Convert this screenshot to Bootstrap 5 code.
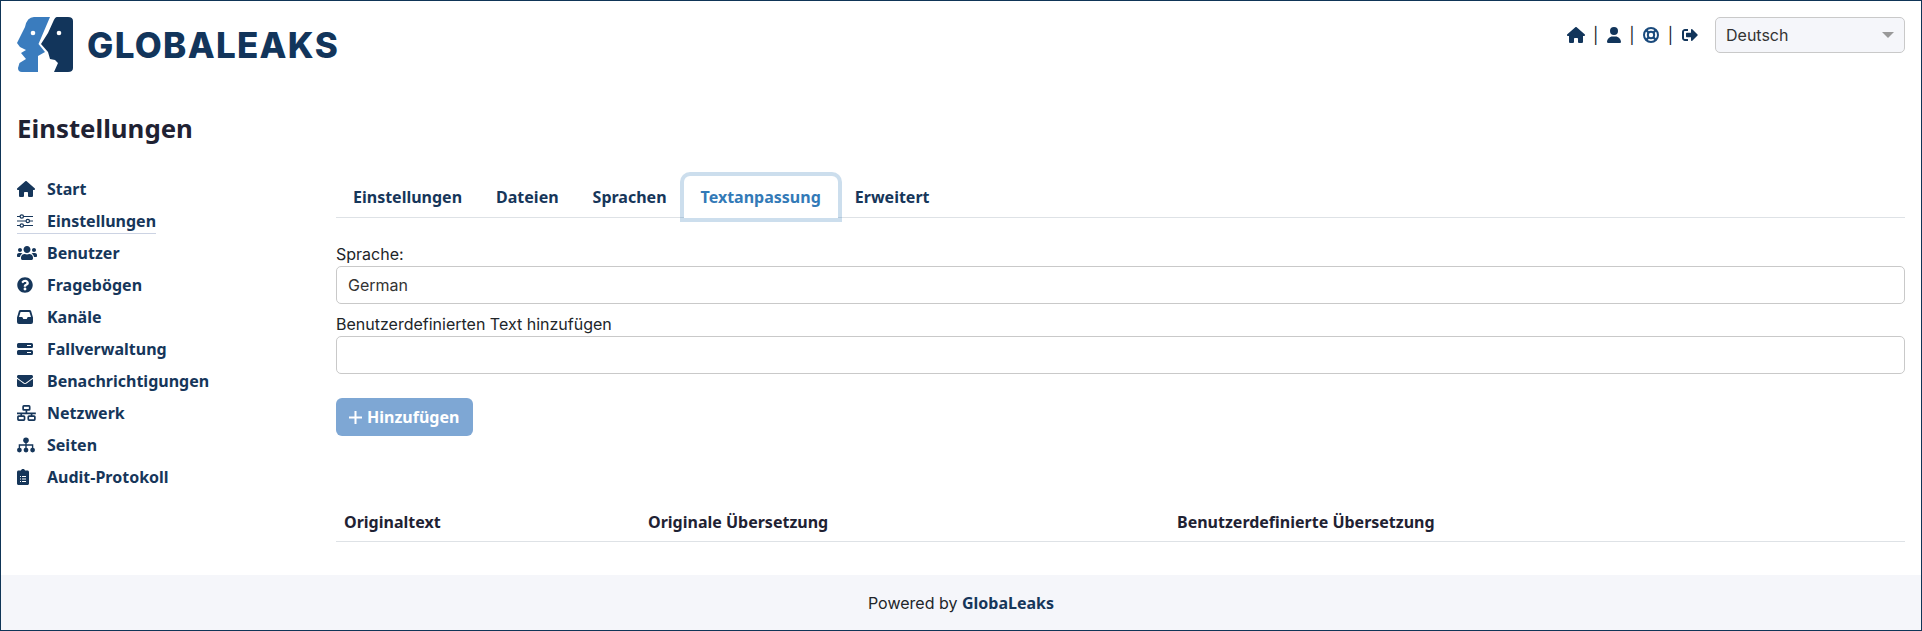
<!DOCTYPE html>
<html lang="de">
<head>
<meta charset="utf-8">
<title>GlobaLeaks</title>
<link rel="stylesheet" href="https://cdn.jsdelivr.net/npm/bootstrap@5.3.0/dist/css/bootstrap.min.css">
<style>
html,body{height:100%}
body{font-family:"Inter","Liberation Sans",sans-serif;font-size:16px;color:#212529;border:1px solid #0f3557;height:631px;overflow:hidden;background:#fff}
.gl-page{height:629px}
.gl-head{padding:16px 16px 0 16px;height:111px}
.gl-logo{width:56px;height:56px;display:block}
.gl-word{font-family:"Inter",sans-serif;font-weight:800;font-size:35px;line-height:1;color:#12355b;margin-left:14px;letter-spacing:1.3px}
.gl-tools{height:36px;gap:8.5px}
.gl-tools svg{fill:#12355b;height:16px;width:auto;display:block}
.gl-sep{color:#212529;font-size:16px;line-height:1}
.gl-lang{width:190px;height:36px;background-color:#f5f6fa;border-color:#c9c9c9!important;color:#333;font-size:16px;padding:0 10px;margin-left:9px;border-radius:5px;display:flex;align-items:center;justify-content:space-between}
.gl-caret{width:0;height:0;border-left:6px solid transparent;border-right:6px solid transparent;border-top:6px solid #999}
.gl-title{font-family:"Noto Sans",sans-serif;font-weight:700;font-size:25.8px;line-height:32px;color:#1f2233;margin:0}
.gl-body{padding:0 16px}
.gl-side{width:319px;flex:none;padding-top:29px}
.gl-side ul{list-style:none;margin:0;padding:0}
.gl-side li{height:32px;display:flex;align-items:center;font-family:"Noto Sans",sans-serif;font-weight:700;font-size:16px;color:#16365a}
.gl-side .gl-ic{width:30px;flex:none;display:flex;align-items:center}
.gl-side svg{fill:#16365a;height:16px;width:auto;display:block}
.gl-cur{border-bottom:1px solid #ccd3e3;height:25px;display:inline-flex;align-items:center}
.gl-main{flex:1;min-width:0;padding-top:32px}
.gl-main .nav-tabs{margin-bottom:24px;border-bottom:1px solid #dee2e6}
.gl-main .nav-link{font-family:"Noto Sans",sans-serif;font-weight:700;font-size:16px;color:#16365a;padding:8px 16px;line-height:24px}
.gl-main .nav-link.active{color:#337ab7;background:#fff;border-color:transparent;box-shadow:0 0 0 4px rgba(51,122,183,.25);border-radius:6px 6px 0 0;position:relative;z-index:1}
.gl-label{line-height:24px;font-size:16px;margin:0;display:block;color:#212529}
.gl-input{height:38px;border-color:#c9c9c9;font-size:16px;padding:0 11px;color:#333;margin-bottom:8px;border-radius:5px}
.gl-add{background:#7ea7d4;border:0;color:#fff;font-family:"Noto Sans",sans-serif;font-weight:700;font-size:16px;height:38px;padding:0 14px 0 13px;border-radius:6px;margin-top:16px;gap:5px}
.gl-add svg{width:13px;height:13px;fill:none;stroke:#fff;stroke-width:2}
.gl-table{margin-top:67px;table-layout:fixed;margin-bottom:0}
.gl-table th{font-family:"Noto Sans",sans-serif;font-weight:700;font-size:16px;color:#1f2233;padding:8px;line-height:22px;border-bottom:1px solid #dee2e6}
.gl-c1{width:304px}
.gl-c2{width:529px}
.gl-foot{background:#f5f6fa;height:55px;font-size:16px;color:#212529}
.gl-foot b{font-family:"Noto Sans",sans-serif;font-weight:700;color:#16365a}
</style>
</head>
<body>
<div class="gl-page d-flex flex-column">
  <header class="gl-head d-flex justify-content-between align-items-start">
    <div class="d-flex align-items-center">
      <svg class="gl-logo" viewBox="17 17 56 56"><path fill="#3a7cbe" d="M50 17H34Q27 17 25 27L17 43 20 47 26 50 21 53 26 59 19.500 63 18 68Q18 72 22 72H38V56L45 52 38.500 44Z"/><path fill="#12355b" d="M57 17H68Q73 17 73 21V68Q73 72 68 72H54L58 63 55 60 50 59 48 52 41 44 48 33 53 22Q55 17 57 17Z"/><circle cx="33" cy="33" r="2.300" fill="#fff"/><circle cx="59" cy="33" r="2.300" fill="#fff"/></svg>
      <span class="gl-word">GLOBALEAKS</span>
    </div>
    <div class="gl-tools d-flex align-items-center">
      <svg viewBox="0 0 576 512"><path d="M575.800 255.500c0 18-15 32.100-32 32.100h-32l.7 160.200c0 2.700-.2 5.400-.5 8.100V472c0 22.100-17.900 40-40 40H456c-1.100 0-2.200 0-3.300-.1c-1.400 .1-2.800 .1-4.200 .1H416 392c-22.100 0-40-17.900-40-40V448 384c0-17.700-14.300-32-32-32H256c-17.700 0-32 14.300-32 32v64 24c0 22.100-17.900 40-40 40H160 128.100c-1.500 0-3-.1-4.500-.2c-1.200 .1-2.400 .2-3.600 .2H104c-22.100 0-40-17.900-40-40V360c0-.9 0-1.900 .1-2.800V287.600H32c-18 0-32-14-32-32.100c0-9 3-17 10-24L266.400 8c7-7 15-8 22-8s15 2 21 7L564.800 231.500c8 7 12 15 11 24z"/></svg>
      <span class="gl-sep">|</span>
      <svg viewBox="0 0 448 512"><path d="M224 256A128 128 0 1 0 224 0a128 128 0 1 0 0 256zm-45.700 48C79.800 304 0 383.800 0 482.300C0 498.700 13.300 512 29.700 512H418.300c16.400 0 29.700-13.300 29.700-29.700C448 383.800 368.200 304 269.700 304H178.300z"/></svg>
      <span class="gl-sep">|</span>
      <svg viewBox="0 0 16 16"><g fill="none" stroke="#1a4a7c"><circle cx="8" cy="8" r="7" stroke-width="2"/><circle cx="8" cy="8" r="3.200" stroke-width="2"/><path stroke-width="2.400" d="M3 3l2.500 2.500M13 3l-2.500 2.500M3 13l2.500-2.500M13 13l-2.500-2.500"/></g></svg>
      <span class="gl-sep">|</span>
      <svg viewBox="0 0 512 512"><path d="M497 273L329 441c-15 15-41 4.500-41-17v-96H152c-13.300 0-24-10.700-24-24v-96c0-13.300 10.700-24 24-24h136V88c0-21.400 25.900-32 41-17l168 168c9.300 9.400 9.300 24.600 0 34zM192 436v-40c0-6.600-5.400-12-12-12H96c-17.700 0-32-14.300-32-32V160c0-17.700 14.300-32 32-32h84c6.600 0 12-5.400 12-12V76c0-6.600-5.400-12-12-12H96c-53 0-96 43-96 96v192c0 53 43 96 96 96h84c6.600 0 12-5.400 12-12z"/></svg>
      <div class="gl-lang border"><span>Deutsch</span><span class="gl-caret"></span></div>
    </div>
  </header>
  <div class="gl-body"><h1 class="gl-title">Einstellungen</h1></div>
  <div class="gl-body d-flex flex-grow-1">
    <nav class="gl-side">
      <ul>
        <li><span class="gl-ic"><svg viewBox="0 0 576 512"><path d="M575.800 255.500c0 18-15 32.100-32 32.100h-32l.7 160.200c0 2.700-.2 5.400-.5 8.100V472c0 22.100-17.900 40-40 40H456c-1.100 0-2.200 0-3.300-.1c-1.400 .1-2.800 .1-4.200 .1H416 392c-22.100 0-40-17.900-40-40V448 384c0-17.700-14.300-32-32-32H256c-17.700 0-32 14.300-32 32v64 24c0 22.100-17.900 40-40 40H160 128.100c-1.500 0-3-.1-4.500-.2c-1.200 .1-2.400 .2-3.600 .2H104c-22.100 0-40-17.900-40-40V360c0-.9 0-1.900 .1-2.800V287.600H32c-18 0-32-14-32-32.100c0-9 3-17 10-24L266.400 8c7-7 15-8 22-8s15 2 21 7L564.800 231.500c8 7 12 15 11 24z"/></svg></span>Start</li>
        <li><span class="gl-cur"><span class="gl-ic"><svg viewBox="0 -1 16 16"><g fill="none" stroke="#16365a" stroke-width="1.200"><path d="M0 2.500h3M6.500 2.500H16M0 7h9M12.500 7H16M0 11.500h3M6.500 11.500H16"/><circle cx="4.800" cy="2.500" r="1.700"/><circle cx="10.800" cy="7" r="1.700"/><circle cx="4.800" cy="11.500" r="1.700"/></g></svg></span>Einstellungen</span></li>
        <li><span class="gl-ic"><svg viewBox="0 0 640 512"><path d="M96 224c35.300 0 64-28.700 64-64s-28.700-64-64-64-64 28.700-64 64 28.700 64 64 64zm448 0c35.300 0 64-28.700 64-64s-28.700-64-64-64-64 28.700-64 64 28.700 64 64 64zm32 32h-64c-17.600 0-33.500 7.100-45.100 18.600 40.300 22.100 68.900 62 75.100 109.400h66c17.700 0 32-14.300 32-32v-32c0-35.300-28.700-64-64-64zm-256 0c61.900 0 112-50.100 112-112S381.900 32 320 32 208 82.100 208 144s50.100 112 112 112zm76.800 32h-8.300c-20.800 10-43.900 16-68.500 16s-47.600-6-68.500-16h-8.300C179.600 288 128 339.600 128 403.200V432c0 26.500 21.500 48 48 48h288c26.500 0 48-21.500 48-48v-28.800c0-63.600-51.600-115.200-115.200-115.200zm-223.700-13.400C161.500 263.100 145.600 256 128 256H64c-35.300 0-64 28.700-64 64v32c0 17.700 14.300 32 32 32h65.900c6.300-47.400 34.900-87.300 75.200-109.400z"/></svg></span>Benutzer</li>
        <li><span class="gl-ic"><svg viewBox="0 0 512 512"><path d="M504 256c0 136.997-111.043 248-248 248S8 392.997 8 256C8 119.083 119.043 8 256 8s248 111.083 248 248zM262.655 90c-54.497 0-89.255 22.957-116.549 63.758-3.536 5.286-2.353 12.415 2.715 16.258l34.699 26.310c5.205 3.947 12.621 3.008 16.665-2.122 17.864-22.658 30.113-35.797 57.303-35.797 20.429 0 45.698 13.148 45.698 32.958 0 14.976-12.363 22.667-32.534 33.976C247.128 238.528 216 254.941 216 296v4c0 6.627 5.373 12 12 12h56c6.627 0 12-5.373 12-12v-1.333c0-28.462 83.186-29.647 83.186-106.667 0-58.002-60.165-102-116.531-102zM256 338c-25.365 0-46 20.635-46 46 0 25.364 20.635 46 46 46s46-20.636 46-46c0-25.365-20.635-46-46-46z"/></svg></span>Fragebögen</li>
        <li><span class="gl-ic"><svg viewBox="0 -1 16 16"><path fill-rule="evenodd" d="M3.500 0h9c.8 0 1.300.4 1.600 1L16 7.500V12a2 2 0 0 1-2 2H2a2 2 0 0 1-2-2V7.500L1.900 1C2.200.4 2.700 0 3.500 0zM3.600 2L2 7h3.300l1 2h3.400l1-2H14l-1.600-5z"/></svg></span>Kanäle</li>
        <li><span class="gl-ic"><svg viewBox="0 -2 16 16"><path fill-rule="evenodd" d="M1.500 0h13A1.500 1.500 0 0 1 16 1.500v2A1.500 1.500 0 0 1 14.500 5h-13A1.500 1.500 0 0 1 0 3.500v-2A1.500 1.500 0 0 1 1.500 0zM10 2v1h4V2zM1.500 7h13A1.500 1.500 0 0 1 16 8.500v2a1.500 1.500 0 0 1-1.500 1.500h-13A1.500 1.500 0 0 1 0 10.500v-2A1.500 1.500 0 0 1 1.500 7zM10 9v1h4V9z"/></svg></span>Fallverwaltung</li>
        <li><span class="gl-ic"><svg viewBox="0 0 512 512"><path d="M502.300 190.800c3.900-3.100 9.700-.2 9.700 4.700V400c0 26.500-21.500 48-48 48H48c-26.500 0-48-21.500-48-48V195.600c0-5 5.700-7.800 9.700-4.700 22.400 17.400 52.100 39.500 154.100 113.600 21.100 15.400 56.700 47.800 92.200 47.600 35.700.3 72-32.800 92.300-47.600 102-74.100 131.600-96.300 154-113.700zM256 320c23.200.4 56.600-29.200 73.400-41.400 132.700-96.300 142.800-104.700 173.400-128.700 5.800-4.500 9.200-11.500 9.200-18.900v-19c0-26.500-21.500-48-48-48H48C21.500 64 0 85.500 0 112v19c0 7.400 3.400 14.300 9.200 18.900 30.600 23.900 40.700 32.400 173.400 128.700 16.800 12.200 50.200 41.800 73.400 41.400z"/></svg></span>Benachrichtigungen</li>
        <li><span class="gl-ic"><svg viewBox="0 0 20 17"><g fill="none" stroke="#16365a" stroke-width="1.800"><rect x="6.500" y="1" width="7" height="4.200" rx=".8"/><rect x="1" y="11.800" width="7" height="4.200" rx=".8"/><rect x="12" y="11.800" width="7" height="4.200" rx=".8"/><path d="M10 5.200V9M0 9h20M4.500 9v2.800M15.500 9v2.800"/></g></svg></span>Netzwerk</li>
        <li><span class="gl-ic"><svg viewBox="0 -.5 18 16"><circle cx="9" cy="2.800" r="2.800"/><circle cx="2.400" cy="12.600" r="2.400"/><circle cx="9" cy="12.600" r="2.400"/><circle cx="15.600" cy="12.600" r="2.400"/><path d="M8.300 4h1.400v2.800h6.600V11h-1.400V8.200H9.700V11H8.300V8.200H3.100V11H1.700V6.800h6.600z"/></svg></span>Seiten</li>
        <li><span class="gl-ic"><svg viewBox="0 0 12 16"><path fill-rule="evenodd" d="M4 1.500C4 .7 4.900 0 6 0s2 .7 2 1.500h2.500c.8 0 1.500.7 1.500 1.500v11.500c0 .8-.7 1.500-1.500 1.500h-9C.7 16 0 15.300 0 14.500V3c0-.8.7-1.500 1.500-1.500zM3 7v1h1V7zm2 0v1h4V7zm-2 2.500v1h1v-1zm2 0v1h4v-1zM3 12v1h1v-1zm2 0v1h4v-1z"/></svg></span>Audit-Protokoll</li>
      </ul>
    </nav>
    <main class="gl-main">
      <ul class="nav nav-tabs">
        <li class="nav-item"><a class="nav-link" href="#">Einstellungen</a></li>
        <li class="nav-item"><a class="nav-link" href="#">Dateien</a></li>
        <li class="nav-item"><a class="nav-link" href="#">Sprachen</a></li>
        <li class="nav-item"><a class="nav-link active" href="#">Textanpassung</a></li>
        <li class="nav-item"><a class="nav-link" href="#">Erweitert</a></li>
      </ul>
      <label class="gl-label" for="gl-s">Sprache:</label>
      <input id="gl-s" class="form-control gl-input" value="German">
      <label class="gl-label" for="gl-t">Benutzerdefinierten Text hinzufügen</label>
      <input id="gl-t" class="form-control gl-input">
      <button class="btn gl-add d-inline-flex align-items-center" type="button"><svg viewBox="0 0 13 13"><path d="M6.500 0v13M0 6.500h13"/></svg>Hinzufügen</button>
      <table class="table gl-table">
        <colgroup><col class="gl-c1"><col class="gl-c2"><col></colgroup>
        <thead><tr><th>Originaltext</th><th>Originale Übersetzung</th><th>Benutzerdefinierte Übersetzung</th></tr></thead>
      </table>
    </main>
  </div>
  <footer class="gl-foot d-flex align-items-center justify-content-center">
    <span>Powered by <b>GlobaLeaks</b></span>
  </footer>
</div>
</body>
</html>
